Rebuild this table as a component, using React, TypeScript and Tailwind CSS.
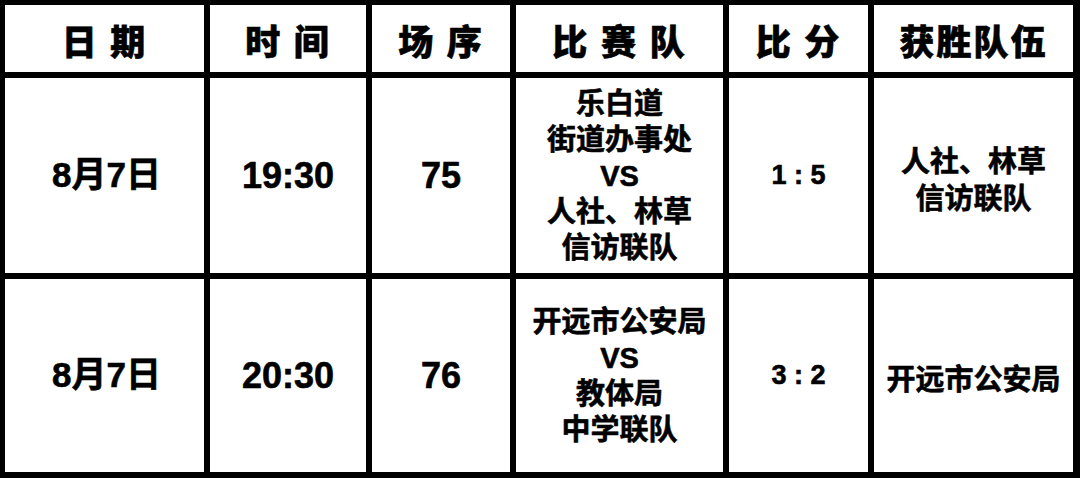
const font = "font-['Liberation_Sans','Noto_Sans_CJK_SC',sans-serif]";

type Match = {
  date: string;
  time: string;
  no: string;
  teams: string[];
  score: string;
  winner: string[];
};

const headers = ["日 期", "时 间", "场 序", "比 赛 队", "比 分", "获胜队伍"];

const matches: Match[] = [
  {
    date: "8月7日",
    time: "19:30",
    no: "75",
    teams: ["乐白道", "街道办事处", "VS", "人社、林草", "信访联队"],
    score: "1 : 5",
    winner: ["人社、林草", "信访联队"],
  },
  {
    date: "8月7日",
    time: "20:30",
    no: "76",
    teams: ["开远市公安局", "VS", "教体局", "中学联队"],
    score: "3 : 2",
    winner: ["开远市公安局"],
  },
];

function Cell({ children, className = "" }: { children: React.ReactNode; className?: string }) {
  return (
    <div
      className={`flex flex-col items-center justify-center bg-white text-center text-black [-webkit-text-stroke:0.6px_black] ${className}`}
    >
      {children}
    </div>
  );
}

export default function App() {
  return (
    <div className={`h-[478px] w-[1080px] bg-black pt-[5px] pb-[6px] pl-[5px] pr-[7px] ${font}`}>
      <div className="grid h-full grid-cols-[199px_156px_138px_207px_139px_199px] grid-rows-[67px_195px_193px] gap-[6px]">
        {headers.map((h) => (
          <Cell key={h} className="pt-[8px] text-[35px] leading-none font-black tracking-[2px]">
            <span className="whitespace-pre">{h}</span>
          </Cell>
        ))}
        {matches.map((m) => (
          <div key={m.no} className="contents">
            <Cell className="pl-[4px] text-[35px] font-bold">{m.date}</Cell>
            <Cell className="text-[36px] font-bold">{m.time}</Cell>
            <Cell className="text-[36px] font-bold">{m.no}</Cell>
            <Cell className="text-[29px] leading-[36px] font-bold">
              {m.teams.map((t, i) => (
                <div key={i}>{t}</div>
              ))}
            </Cell>
            <Cell className="text-[27px] font-bold">{m.score}</Cell>
            <Cell className="pt-[10px] text-[29px] leading-[37px] font-bold">
              {m.winner.map((t, i) => (
                <div key={i}>{t}</div>
              ))}
            </Cell>
          </div>
        ))}
      </div>
    </div>
  );
}
